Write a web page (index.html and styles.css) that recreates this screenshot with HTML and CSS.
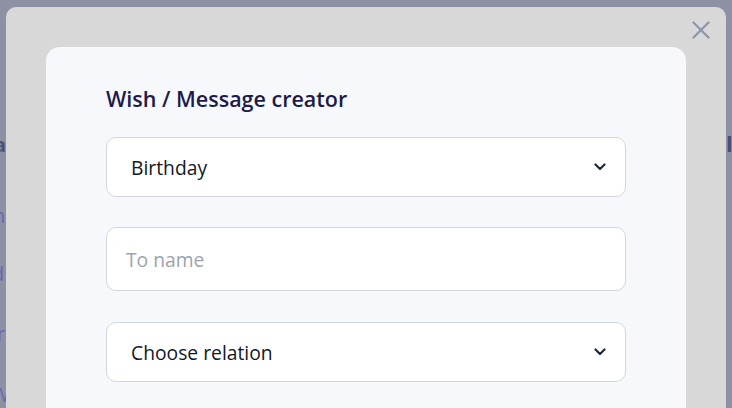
FILE: index.html
```html
<!DOCTYPE html>
<html lang="en">
<head>
<meta charset="utf-8">
<title>Wish / Message creator</title>
<link rel="stylesheet" href="styles.css">
</head>
<body>
<div class="behind behind-left">
  <span class="g g-a">a</span>
  <span class="g g-1">n</span>
  <span class="g g-2">d</span>
  <span class="g g-3">r</span>
  <span class="g g-4">W</span>
</div>
<div class="behind behind-right">
  <span class="g g-r">l</span>
</div>
<div class="modal">
  <button class="close" aria-label="Close">
    <svg width="18" height="18" viewBox="0 0 18 18"><path d="M1.5 1.5 L16.5 16.5 M16.5 1.5 L1.5 16.5" stroke="#8c95a8" stroke-width="2.2" stroke-linecap="round" fill="none"/></svg>
  </button>
  <div class="card">
    <h2 class="title">Wish / Message creator</h2>
    <div class="fields">
      <div class="select">
        <span>Birthday</span>
        <svg class="chev" width="12" height="8" viewBox="0 0 12 8"><path d="M1.5 1.5 L6 6 L10.5 1.5" stroke="#1f2937" stroke-width="2.2" fill="none" stroke-linecap="round" stroke-linejoin="round"/></svg>
      </div>
      <div class="input"><span class="placeholder">To name</span></div>
      <div class="select">
        <span>Choose relation</span>
        <svg class="chev" width="12" height="8" viewBox="0 0 12 8"><path d="M1.5 1.5 L6 6 L10.5 1.5" stroke="#1f2937" stroke-width="2.2" fill="none" stroke-linecap="round" stroke-linejoin="round"/></svg>
      </div>
    </div>
  </div>
</div>
</body>
</html>
```
FILE: styles.css
```css
html, body {
  margin: 0;
  padding: 0;
  height: 100%;
}
body {
  background: #8e90a3;
  font-family: "Open Sans", "Noto Sans", sans-serif;
  overflow: hidden;
  position: relative;
}
.behind {
  position: absolute;
  top: 0;
  width: 6px;
  height: 100%;
  overflow: hidden;
}
.behind-left { left: 0; }
.behind-right { right: 0; width: 6px; }
.g {
  position: absolute;
  font-size: 20px;
  line-height: 1;
  color: #6a67b3;
}
.g-a { top: 135px; left: -6px; color: #4e5274; font-weight: 700; }
.g-1 { top: 206px; left: -7px; }
.g-2 { top: 264px; left: -8px; }
.g-3 { top: 324px; left: -3px; }
.g-4 { top: 385px; left: -9px; }
.g-r { top: 132px; left: 0; color: #4a4f78; font-weight: 700; font-size: 22px; }
.modal {
  position: relative;
  margin: 7px 6px 0 6px;
  height: calc(100% - 7px);
  box-sizing: border-box;
  background: #d8d8d8;
  border-radius: 10px 10px 0 0;
  padding: 40px 40px 0 40px;
  display: flex;
  flex-direction: column;
}
.close {
  position: absolute;
  top: 14px;
  right: 16px;
  width: 18px;
  height: 18px;
  padding: 0;
  border: 0;
  background: none;
  display: flex;
}
.card {
  flex: 1;
  background: #f7f8fb;
  border-radius: 14px 14px 0 0;
  padding: 36px 60px 0 60px;
  box-sizing: border-box;
}
.title {
  margin: 0 0 23px 0;
  font-size: 21.5px;
  line-height: 31px;
  font-weight: 600;
  color: #1e1b4b;
}
.fields {
  display: flex;
  flex-direction: column;
  gap: 30px;
}
.select, .input {
  box-sizing: border-box;
  background: #fff;
  border: 1px solid #d3d6dd;
  border-radius: 10px;
  display: flex;
  align-items: center;
  font-size: 19.3px;
  color: #111827;
}
.select {
  height: 60px;
  padding: 0 19px 0 24px;
  justify-content: space-between;
}
.input {
  height: 64px;
  padding: 0 19px;
  margin-bottom: 1px;
}
.placeholder { color: #9ca3af; }
.chev { display: block; }
```
